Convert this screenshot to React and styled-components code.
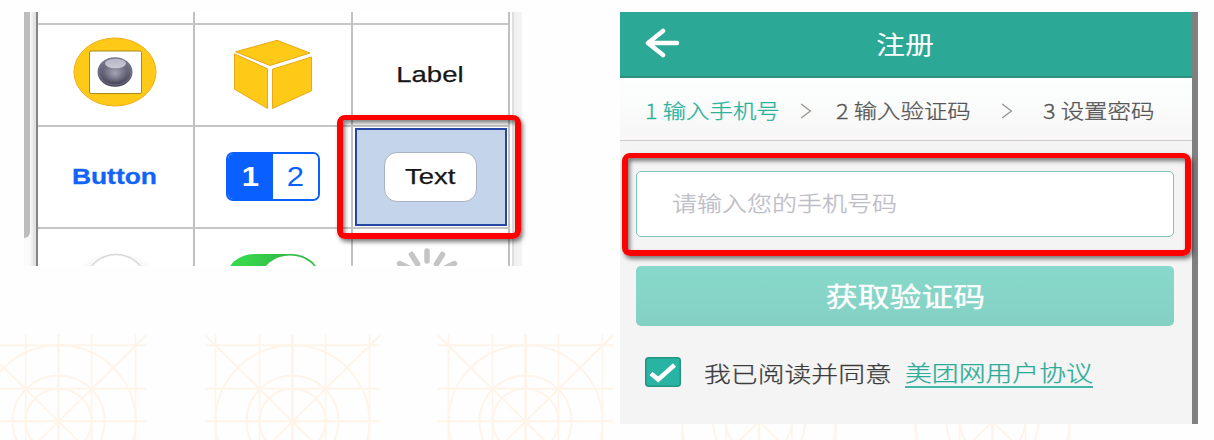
import React from "react";
import styled, { createGlobalStyle, css } from "styled-components";

const GlobalStyle = createGlobalStyle`
  * { box-sizing: border-box; }
  html, body { margin: 0; padding: 0; }
  body { width: 1214px; height: 440px; overflow: hidden; background: #fefefe; }
`;

const latin = `"Liberation Sans", Arial, sans-serif`;
const chinese = `"Noto Sans CJK SC", "Noto Sans", sans-serif`;

const Page = styled.main`
  position: relative;
  display: flex;
  align-items: flex-start;
  gap: 98px;
  width: 1214px;
  height: 440px;
  padding: 12px 16px 0 24px;
  overflow: hidden;
`;

const Backdrop = styled.svg`
  position: absolute;
  left: 0;
  top: 334px;
  z-index: 0;
`;

const Wide = styled.span`
  display: block;
  flex: none;
  white-space: nowrap;
  transform: scaleX(${(p) => p.$x || 1});
  transform-origin: ${(p) => p.$from || "center"} center;
`;

/* ---- component library ---- */

const Library = styled.section`
  position: relative;
  z-index: 1;
  display: flex;
  width: 498px;
  height: 254px;
  background: #fff;
`;

const ScrollTrack = styled.div`
  width: 6px;
  background: #fafafa;
`;

const ScrollThumb = styled.div`
  height: 226px;
  background: #bdbdbd;
  border-bottom-right-radius: 6px;
`;

const Gutter = styled.div`
  width: 8px;
  background: linear-gradient(90deg, #fafafa, #e2e2e2 75%);
  border-right: 2px solid #858585;
`;

const Grid = styled.div`
  display: grid;
  grid-template-columns: 157px 158px 157px;
  grid-template-rows: 13px 102px 102px 37px;
  width: 472px;
`;

const Cell = styled.div`
  display: flex;
  align-items: center;
  justify-content: center;
  overflow: hidden;
  padding-bottom: ${(p) => p.$lift || 0}px;
  padding-right: ${(p) => p.$shift || 0}px;
  border-right: 2px solid #c0c0c0;
  border-bottom: 2px solid #c6c6c6;
  ${(p) => p.$last && css`border-bottom: 0; align-items: flex-start;`}
`;

const Edge = styled.div`
  width: 12px;
  border-left: 2px solid #fff;
  background: linear-gradient(90deg, #dedede 2px, #f0f0f0 2px, #f4f4f4);
`;

const LabelText = styled(Wide)`
  font: 22px/26px ${latin};
  color: #171717;
  -webkit-text-stroke: 0.25px #171717;
`;

const ButtonText = styled(Wide)`
  font: bold 22px/26px ${latin};
  color: #1263f8;
  -webkit-text-stroke: 0.3px #1263f8;
`;

const Segmented = styled.div`
  display: flex;
  width: 94px;
  height: 49px;
  overflow: hidden;
  border: 2px solid #0a60ff;
  border-radius: 7px;
`;

const Segment = styled.div`
  flex: 1;
  display: flex;
  align-items: center;
  justify-content: center;
  font: ${(p) => (p.$on ? "bold" : "normal")} 27px/44px ${latin};
  color: ${(p) => (p.$on ? "#fff" : "#0a60ff")};
  background: ${(p) => (p.$on ? "#0a60ff" : "#fff")};
`;

const Selected = styled.div`
  display: flex;
  align-items: center;
  justify-content: center;
  width: 152px;
  height: 98px;
  padding-bottom: 1px;
  background: #c4d4ea;
  border: 2px solid #2847a2;
`;

const TextBox = styled.div`
  display: flex;
  align-items: center;
  justify-content: center;
  width: 93px;
  height: 50px;
  background: #fff;
  border: 1.5px solid #a9b2c0;
  border-radius: 13px;
`;

const Highlight = styled.div`
  position: absolute;
  z-index: 3;
  left: ${(p) => p.$x}px;
  top: ${(p) => p.$y}px;
  width: ${(p) => p.$w}px;
  height: ${(p) => p.$h}px;
  border: 6px solid #fe0000;
  border-top-width: 5px;
  border-radius: 8px;
  box-shadow: 2px 3px 4px rgba(0, 0, 0, 0.5), inset 2px 3px 4px rgba(0, 0, 0, 0.5);
`;

/* ---- sign-up screen ---- */

const Phone = styled.section`
  position: relative;
  z-index: 1;
  width: 578px;
  height: 412px;
  border-right: 6px solid #808080;
  background: #f4f4f4;
  font-family: ${chinese};
`;

const Header = styled.header`
  display: grid;
  grid-template-columns: 80px 1fr 80px;
  align-items: center;
  height: 66px;
  padding: 0 1px 2px 0;
  background: #2ca996;
  border-bottom: 2px solid #309080;
`;

const Back = styled.svg`
  margin-left: 25px;
`;

const Title = styled.h1`
  display: flex;
  justify-content: center;
  margin: 0;
  padding-bottom: 1px;
  font-size: 25px;
  line-height: 36px;
  font-weight: 400;
  color: #fff;
`;

const Steps = styled.nav`
  display: flex;
  align-items: center;
  height: 63px;
  padding: 4px 0 0 25px;
  background: linear-gradient(#fcfffe, #f8f6f7);
  border-bottom: 1px solid #cbcbcb;
`;

const Step = styled.div`
  width: ${(p) => p.$w}px;
  font-size: 20px;
  line-height: 30px;
  font-weight: 300;
  color: ${(p) => (p.$on ? "#2bb29b" : "#565656")};
  -webkit-text-stroke: 0.3px currentColor;
`;

const Chevron = styled.svg`
  margin-right: ${(p) => p.$gap}px;
`;

const Form = styled.div`
  display: flex;
  flex-direction: column;
  padding: 30px 18px 0 16px;
`;

const PhoneInput = styled.div`
  display: flex;
  align-items: center;
  height: 66px;
  padding: 0 0 4px 35px;
  background: #fff;
  border: 1px solid #7dc6ba;
  border-radius: 5px;
  font-size: 21px;
  font-weight: 300;
  color: #bdbdc5;
  -webkit-text-stroke: 0.3px currentColor;
`;

const Submit = styled.div`
  display: flex;
  align-items: center;
  justify-content: center;
  height: 60px;
  margin-top: 29px;
  padding-bottom: 2px;
  background: linear-gradient(#88d9cb, #84d1c4);
  border-radius: 5px;
  font-size: 27px;
  color: #fff;
  -webkit-text-stroke: 0.3px #fff;
`;

const Agreement = styled.div`
  display: flex;
  align-items: center;
  margin: 30px 0 0 9px;
  height: 32px;
  font-size: 22px;
  line-height: 32px;
  font-weight: 300;
  color: #3c3c3c;
  -webkit-text-stroke: 0.25px currentColor;
`;

const Check = styled.svg`
  margin-right: 23px;
`;

const Consent = styled.div`
  width: 201px;
`;

const Terms = styled.div`
  width: 188px;
  height: 30px;
  margin-top: 2px;
  line-height: 27px;
  color: #2bac98;
  border-bottom: 2px solid #43b7a6;
`;

const tileCenters = [58.6, 292.5, 525.5, 759, 992.5];

function GridTile({ x }) {
  return (
    <g transform={`translate(${x} 87.2)`} fill="none" stroke="#fef4e9" strokeWidth="2">
      {[-77, -33, 0, 33, 77].map((v) => (
        <path key={v} d={`M${v} -87V20`} strokeWidth={v === 0 ? 2.6 : 1.7} />
      ))}
      {[-76, -32.5, 0].map((v) => (
        <path key={v} d={`M-87.5 ${v}H87.5`} />
      ))}
      <path d="M-87.5 -86L20 20M87.5 -86L-20 20" />
      <ellipse rx="33" ry="32.5" />
      <ellipse rx="46" ry="45.5" />
      <ellipse rx="77" ry="76" />
    </g>
  );
}

function ObjectIcon() {
  return (
    <svg width="84" height="70" viewBox="0 0 84 70">
      <defs>
        <linearGradient id="ball" x2="0" y2="1">
          <stop offset="0" stopColor="#77778c" />
          <stop offset=".5" stopColor="#656477" />
          <stop offset="1" stopColor="#454358" />
        </linearGradient>
        <radialGradient id="glow">
          <stop offset="0" stopColor="#a5a4b5" />
          <stop offset="1" stopColor="#a5a4b5" stopOpacity="0" />
        </radialGradient>
        <linearGradient id="shine" x2="0" y2="1">
          <stop offset="0" stopColor="#b5b5c5" />
          <stop offset="1" stopColor="#c8c8d6" />
        </linearGradient>
      </defs>
      <ellipse cx="42" cy="35" rx="41" ry="34" fill="#ffc917" stroke="#f3af1c" />
      <rect x="16.5" y="14" width="52" height="42.5" rx="1.5" fill="#fff" stroke="#a98a1c" />
      <ellipse cx="42" cy="35" rx="17.5" ry="14.8" fill="url(#ball)" />
      <ellipse cx="42" cy="35" rx="16.5" ry="13" fill="none" stroke="#85849a" strokeWidth=".6" />
      <ellipse cx="42" cy="36" rx="12" ry="10" fill="url(#glow)" />
      <ellipse cx="42.5" cy="26.5" rx="10.5" ry="4.8" fill="url(#shine)" />
    </svg>
  );
}

function CubeIcon() {
  return (
    <svg width="80" height="72" viewBox="0 0 80 72" fill="#ffc917" stroke="#e9a91a">
      <path d="M2.5 12.8L44 1.3L77 14L37 26.5Z" />
      <path d="M1.5 14.8L34.5 29.8V69.5L1.5 50.2Z" />
      <path d="M39.5 30.2L78.5 18V51.8L39.5 69.5Z" />
    </svg>
  );
}

function SliderKnob() {
  return (
    <svg width="90" height="37" viewBox="0 0 90 37">
      <defs>
        <radialGradient id="knobShade">
          <stop offset=".55" stopColor="#e6e6e6" />
          <stop offset="1" stopColor="#fff" />
        </radialGradient>
      </defs>
      <ellipse cx="45" cy="54" rx="43" ry="31" fill="url(#knobShade)" />
      <ellipse cx="45" cy="52" rx="29" ry="26.5" fill="#fff" stroke="#d8d8d8" strokeWidth="1.5" />
    </svg>
  );
}

function ToggleIcon() {
  return (
    <svg width="94" height="37" viewBox="0 0 94 37">
      <defs>
        <linearGradient id="green" x2="1" y2="0">
          <stop offset=".2" stopColor="#38d64d" />
          <stop offset=".6" stopColor="#32bd47" />
        </linearGradient>
      </defs>
      <rect x="0" y="25" width="94" height="50" rx="28" ry="25" fill="url(#green)" />
      <ellipse cx="64" cy="50.5" rx="29" ry="24" fill="#fff" />
    </svg>
  );
}

function SpinnerIcon() {
  return (
    <svg width="80" height="37" viewBox="0 0 80 37" stroke="#c5c5c5" strokeWidth="5.5" strokeLinecap="round">
      <path d="M38 22V32" />
      <path d="M22.5 25.5L28.5 35" />
      <path d="M53.5 25.5L47.5 35" />
      <path d="M10.5 34.5L22 40" />
      <path d="M65.5 34.5L54 40" />
    </svg>
  );
}

function StepChevron({ gap }) {
  return (
    <Chevron $gap={gap} width="12" height="18" viewBox="0 0 12 18">
      <path d="M1.2 2L10.4 9L1.2 16" fill="none" stroke="#96968e" strokeWidth="1.3" />
    </Chevron>
  );
}

export default function App() {
  return (
    <>
      <GlobalStyle />
      <Page>
        <Backdrop width="1214" height="106">
          {tileCenters.map((x) => <GridTile key={x} x={x} />)}
        </Backdrop>

        <Library>
          <ScrollTrack><ScrollThumb /></ScrollTrack>
          <Gutter />
          <Grid>
            <Cell /><Cell /><Cell />
            <Cell $lift={6} $shift={1}><ObjectIcon /></Cell>
            <Cell><CubeIcon /></Cell>
            <Cell $lift={1} $shift={2}><LabelText $x={1.25}>Label</LabelText></Cell>
            <Cell $lift={1} $shift={2}><ButtonText $x={1.2}>Button</ButtonText></Cell>
            <Cell $lift={1}>
              <Segmented>
                <Segment $on><Wide $x={1.15}>1</Wide></Segment>
                <Segment><Wide $x={1.15}>2</Wide></Segment>
              </Segmented>
            </Cell>
            <Cell>
              <Selected>
                <TextBox><LabelText $x={1.25}>Text</LabelText></TextBox>
              </Selected>
            </Cell>
            <Cell $last><SliderKnob /></Cell>
            <Cell $last><ToggleIcon /></Cell>
            <Cell $last $shift={3}><SpinnerIcon /></Cell>
          </Grid>
          <Edge />
          <Highlight $x={313} $y={103} $w={184} $h={124} />
        </Library>

        <Phone>
          <Header>
            <Back width="36" height="32" viewBox="0 0 36 32">
              <path d="M18 4L3 16L18 28M3.5 16H32" fill="none" stroke="#fff" strokeWidth="4.5" strokeLinecap="round" strokeLinejoin="round" />
            </Back>
            <Title><Wide $x={1.16}>注册</Wide></Title>
          </Header>
          <Steps>
            <Step $on $w={155}><Wide $x={1.17} $from="left">1 输入手机号</Wide></Step>
            <StepChevron gap={24} />
            <Step $w={165}><Wide $x={1.17} $from="left">2 输入验证码</Wide></Step>
            <StepChevron gap={30} />
            <Step $w={112}><Wide $x={1.17} $from="left">3 设置密码</Wide></Step>
          </Steps>
          <Form>
            <PhoneInput><Wide $x={1.19} $from="left">请输入您的手机号码</Wide></PhoneInput>
            <Submit><Wide $x={1.18}>获取验证码</Wide></Submit>
            <Agreement>
              <Check width="36" height="30" viewBox="0 0 36 30">
                <rect x=".75" y=".75" width="34.5" height="28.5" rx="3" fill="#28b3a3" stroke="#219482" strokeWidth="1.5" />
                <path d="M6 16.5L13.2 22.5L29.5 8" fill="none" stroke="#fff" strokeWidth="4.5" />
              </Check>
              <Consent><Wide $x={1.22} $from="left">我已阅读并同意</Wide></Consent>
              <Terms><Wide $x={1.22} $from="left">美团网用户协议</Wide></Terms>
            </Agreement>
          </Form>
          <Highlight $x={2} $y={141} $w={569} $h={103} />
        </Phone>
      </Page>
    </>
  );
}
